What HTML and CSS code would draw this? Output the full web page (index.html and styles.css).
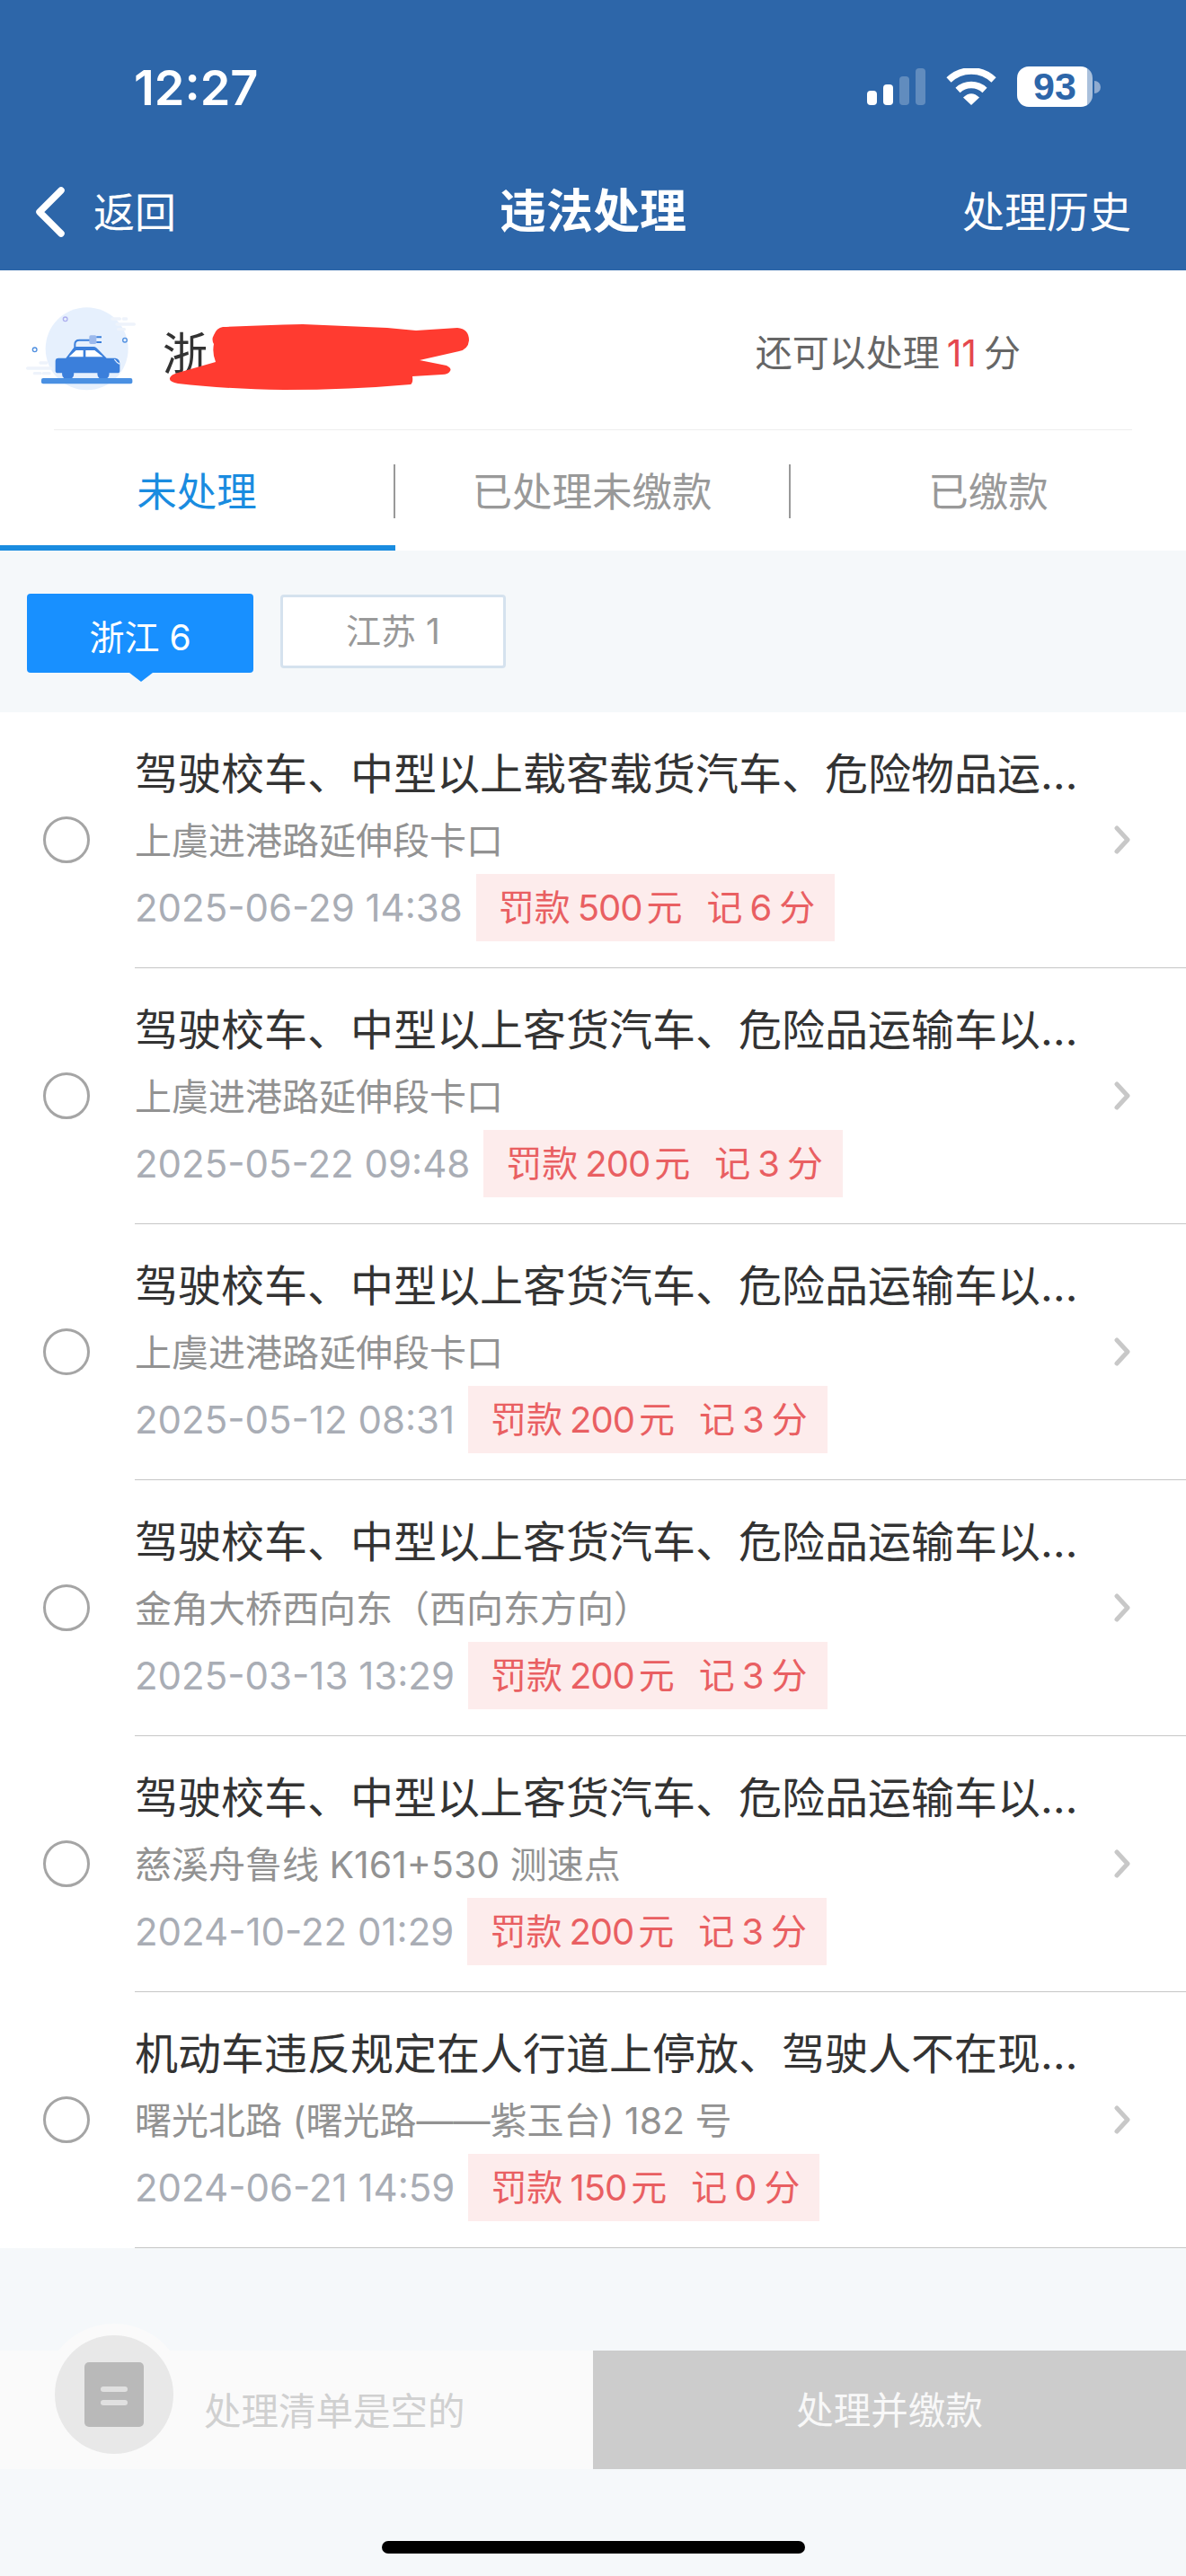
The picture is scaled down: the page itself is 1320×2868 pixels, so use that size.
FILE: index.html
```html
<!DOCTYPE html>
<html lang="zh-CN">
<head>
  <meta charset="UTF-8">
  <meta name="viewport" content="width=device-width, initial-scale=1.0">
  <title>违法处理</title>
  <link rel="stylesheet" href="styles.css">
</head>
<body>
  <header class="top">
    <div class="status">
      <span class="clock">12:27</span>
      <div class="status-icons">
        <svg class="signal" width="65" height="41" viewBox="0 0 65 41">
          <rect x="0" y="25" width="11" height="16" rx="4" fill="#fff"/>
          <rect x="18" y="18" width="11" height="23" rx="4" fill="#fff"/>
          <rect x="36" y="9" width="11" height="32" rx="4" fill="#fff" opacity="0.25"/>
          <rect x="54" y="0" width="11" height="41" rx="4" fill="#fff" opacity="0.25"/>
        </svg>
        <svg class="wifi" width="58" height="41" viewBox="0 0 58 41">
          <path d="M4 13A36 36 0 0 1 54 13" fill="none" stroke="#fff" stroke-width="7.5"/>
          <path d="M14 24.500A22 22 0 0 1 44 24.500" fill="none" stroke="#fff" stroke-width="7.500"/>
          <path d="M20 32.500Q29 24 38 32.500L29 41Z" fill="#fff"/>
        </svg>
        <div class="battery">
          <span class="battery-level">93</span>
          <span class="battery-nub"></span>
        </div>
      </div>
    </div>
    <nav class="nav">
      <div class="nav-back">
        <svg width="32" height="56" viewBox="0 0 32 56">
          <polyline points="28,4 4,28 28,52" fill="none" stroke="#fff" stroke-width="7.500" stroke-linecap="round" stroke-linejoin="round"/>
        </svg>
        <span class="nav-back-text">返回</span>
      </div>
      <div class="nav-title">违法处理</div>
      <div class="nav-history">处理历史</div>
    </nav>
  </header>

  <section class="vehicle">
    <svg class="car" width="140" height="100" viewBox="0 0 420 300">
      <circle cx="230" cy="145" r="138" fill="#e6f0fd"/>
      <g stroke="#eef3fb" stroke-width="10" stroke-linecap="round">
        <line x1="315" y1="45" x2="340" y2="45"/>
        <line x1="352" y1="45" x2="362" y2="45"/>
        <line x1="330" y1="63" x2="388" y2="63"/>
        <line x1="335" y1="80" x2="355" y2="80"/>
        <line x1="75" y1="192" x2="95" y2="192"/>
        <line x1="32" y1="210" x2="110" y2="210"/>
        <line x1="55" y1="227" x2="75" y2="227"/>
        <line x1="85" y1="227" x2="105" y2="227"/>
      </g>
      <circle cx="158" cy="46" r="7" fill="none" stroke="#aeb0ee" stroke-width="4"/>
      <circle cx="56" cy="148" r="7" fill="none" stroke="#4f8fe0" stroke-width="4"/>
      <circle cx="357" cy="116" r="7" fill="none" stroke="#4f8fe0" stroke-width="4"/>
      <path d="M190 142V130Q190 116 205 116H240" fill="none" stroke="#3b7fdb" stroke-width="6"/>
      <rect x="238" y="100" width="24" height="29" rx="5" fill="#9cb9ec"/>
      <path d="M262 106H279M262 123H279" stroke="#3b7fdb" stroke-width="6"/>
      <circle cx="167" cy="228" r="20" fill="#3b7fdb"/>
      <circle cx="285" cy="228" r="20" fill="#3b7fdb"/>
      <path d="M160 176L186 142Q190 138 196 138H252Q258 138 262 142L296 176H325Q340 178 340 195V218Q340 226 332 226H133Q125 226 125 218V186Q125 176 135 176Z" fill="#3b7fdb"/>
      <path d="M170 172L194 150H218V172ZM226 150H256L284 172H226Z" fill="#fff"/>
      <path d="M322 180Q330 192 340 196" fill="none" stroke="#e6f0fd" stroke-width="4"/>
      <rect x="78" y="243" width="304" height="19" rx="6" fill="#4a90e2"/>
    </svg>
    <div class="plate">浙</div>
    <div class="points">还可以处理<em>11</em>分</div>
    <svg class="scribble" width="340" height="80" viewBox="185 358 340 80">
      <path d="M238 373Q241 365 248 364Q290 362 337 361L431 365L463 368L509 365Q522 366 522 379Q521 389 511 391L467 401L497 407Q503 410 501 413Q499 417 492 417L459 419Q460 426 457 428Q390 434 316 434Q250 433 198 427Q188 425 189 421Q190 417 198 415L240 403Q236 393 238 383Q235 378 238 373Z" fill="#ff3b30"/>
    </svg>
  </section>
  <div class="divider-wrap"><div class="divider"></div></div>

  <div class="tabs">
    <div class="tab tab-active"><div class="tab-label">未处理</div></div>
    <div class="tab"><div class="tab-label">已处理未缴款</div></div>
    <div class="tab"><div class="tab-label tab-last">已缴款</div></div>
  </div>

  <div class="regions">
    <div class="region region-active">浙江 6</div>
    <div class="region">江苏 1</div>
  </div>

  <ul class="list">
    <li class="row">
      <div class="radio-cell"><span class="radio"></span></div>
      <div class="row-body">
        <div class="row-text">
          <div class="row-title">驾驶校车、中型以上载客载货汽车、危险物品运…</div>
          <div class="row-place">上虞进港路延伸段卡口</div>
          <div class="row-meta">
            <span class="row-date">2025-06-29 14:38</span>
            <span class="fine">罚款<span class="fine-money">500</span>元<i class="fine-gap"></i>记<span class="fine-points">6</span>分</span>
          </div>
        </div>
        <svg class="more" width="18" height="32" viewBox="0 0 18 32"><polyline points="3,3 15,16 3,29" fill="none" stroke="#c8c8c8" stroke-width="5" stroke-linecap="round" stroke-linejoin="round"/></svg>
      </div>
    </li>
    <li class="row">
      <div class="radio-cell"><span class="radio"></span></div>
      <div class="row-body">
        <div class="row-text">
          <div class="row-title">驾驶校车、中型以上客货汽车、危险品运输车以…</div>
          <div class="row-place">上虞进港路延伸段卡口</div>
          <div class="row-meta">
            <span class="row-date">2025-05-22 09:48</span>
            <span class="fine">罚款<span class="fine-money">200</span>元<i class="fine-gap"></i>记<span class="fine-points">3</span>分</span>
          </div>
        </div>
        <svg class="more" width="18" height="32" viewBox="0 0 18 32"><polyline points="3,3 15,16 3,29" fill="none" stroke="#c8c8c8" stroke-width="5" stroke-linecap="round" stroke-linejoin="round"/></svg>
      </div>
    </li>
    <li class="row">
      <div class="radio-cell"><span class="radio"></span></div>
      <div class="row-body">
        <div class="row-text">
          <div class="row-title">驾驶校车、中型以上客货汽车、危险品运输车以…</div>
          <div class="row-place">上虞进港路延伸段卡口</div>
          <div class="row-meta">
            <span class="row-date">2025-05-12 08:31</span>
            <span class="fine">罚款<span class="fine-money">200</span>元<i class="fine-gap"></i>记<span class="fine-points">3</span>分</span>
          </div>
        </div>
        <svg class="more" width="18" height="32" viewBox="0 0 18 32"><polyline points="3,3 15,16 3,29" fill="none" stroke="#c8c8c8" stroke-width="5" stroke-linecap="round" stroke-linejoin="round"/></svg>
      </div>
    </li>
    <li class="row">
      <div class="radio-cell"><span class="radio"></span></div>
      <div class="row-body">
        <div class="row-text">
          <div class="row-title">驾驶校车、中型以上客货汽车、危险品运输车以…</div>
          <div class="row-place">金角大桥西向东（西向东方向）</div>
          <div class="row-meta">
            <span class="row-date">2025-03-13 13:29</span>
            <span class="fine">罚款<span class="fine-money">200</span>元<i class="fine-gap"></i>记<span class="fine-points">3</span>分</span>
          </div>
        </div>
        <svg class="more" width="18" height="32" viewBox="0 0 18 32"><polyline points="3,3 15,16 3,29" fill="none" stroke="#c8c8c8" stroke-width="5" stroke-linecap="round" stroke-linejoin="round"/></svg>
      </div>
    </li>
    <li class="row">
      <div class="radio-cell"><span class="radio"></span></div>
      <div class="row-body">
        <div class="row-text">
          <div class="row-title">驾驶校车、中型以上客货汽车、危险品运输车以…</div>
          <div class="row-place">慈溪舟鲁线 K161+530 测速点</div>
          <div class="row-meta">
            <span class="row-date">2024-10-22 01:29</span>
            <span class="fine">罚款<span class="fine-money">200</span>元<i class="fine-gap"></i>记<span class="fine-points">3</span>分</span>
          </div>
        </div>
        <svg class="more" width="18" height="32" viewBox="0 0 18 32"><polyline points="3,3 15,16 3,29" fill="none" stroke="#c8c8c8" stroke-width="5" stroke-linecap="round" stroke-linejoin="round"/></svg>
      </div>
    </li>
    <li class="row">
      <div class="radio-cell"><span class="radio"></span></div>
      <div class="row-body">
        <div class="row-text">
          <div class="row-title">机动车违反规定在人行道上停放、驾驶人不在现…</div>
          <div class="row-place">曙光北路 (曙光路——紫玉台) 182 号</div>
          <div class="row-meta">
            <span class="row-date">2024-06-21 14:59</span>
            <span class="fine">罚款<span class="fine-money">150</span>元<i class="fine-gap"></i>记<span class="fine-points">0</span>分</span>
          </div>
        </div>
        <svg class="more" width="18" height="32" viewBox="0 0 18 32"><polyline points="3,3 15,16 3,29" fill="none" stroke="#c8c8c8" stroke-width="5" stroke-linecap="round" stroke-linejoin="round"/></svg>
      </div>
    </li>
  </ul>

  <footer class="cart">
    <div class="cart-info">
      <div class="cart-badge">
        <div class="cart-doc">
          <span class="cart-doc-line"></span>
          <span class="cart-doc-line"></span>
        </div>
      </div>
      <span class="cart-empty">处理清单是空的</span>
    </div>
    <div class="cart-pay">处理并缴款</div>
  </footer>
  <div class="home-bar"></div>
</body>
</html>
```

FILE: styles.css
```css
* {
  box-sizing: border-box;
}

body {
  margin: 0;
  width: 1320px;
  height: 2868px;
  overflow: hidden;
  background-color: #f5f8fa;
  font-family: Inter, "Noto Sans CJK SC", sans-serif;
}

/* blue header */
.top {
  height: 301px;
  padding-top: 74px;
  background-color: #2d66a9;
  color: #fff;
}

.status {
  display: flex;
  justify-content: space-between;
  align-items: center;
  height: 45px;
  padding: 0 95px 0 149px;
}

.clock {
  padding-top: 2px;
  font-size: 54px;
  font-weight: 600;
}

.status-icons {
  display: flex;
  align-items: center;
  gap: 22px;
}

.battery {
  display: flex;
  align-items: center;
  gap: 2px;
}

.battery-level {
  width: 84px;
  height: 45px;
  border-radius: 13px;
  background: linear-gradient(to right, #fff 93%, #a9c0dc 93%);
  color: #2d66a9;
  font-family: "Liberation Sans", sans-serif;
  font-size: 43px;
  font-weight: 700;
  line-height: 45px;
  text-align: center;
}

.battery-nub {
  width: 7px;
  height: 14px;
  border-radius: 0 7px 7px 0;
  background-color: #8fabd0;
}

.nav {
  display: grid;
  grid-template-columns: 1fr auto 1fr;
  align-items: center;
  height: 86px;
  margin-top: 74px;
  padding: 0 40px;
}

.nav-back {
  display: flex;
  align-items: center;
  gap: 32px;
  font-size: 46px;
}

.nav-back-text {
  padding-bottom: 7px;
}

.nav-title {
  padding-bottom: 9px;
  font-size: 52px;
  font-weight: 700;
}

.nav-history {
  padding: 0 21px 7px 0;
  font-size: 47px;
  text-align: right;
}

/* plate row */
.vehicle {
  position: relative;
  display: flex;
  align-items: center;
  height: 177px;
  padding-left: 20px;
  background-color: #fff;
}

.plate {
  margin-left: 21px;
  color: #333;
  font-size: 50px;
}

.points {
  margin-left: auto;
  margin-right: 184px;
  color: #666;
  font-size: 41px;
}

.points em {
  margin: 0 8px;
  color: #e5484d;
  font-style: normal;
}

.scribble {
  position: absolute;
  left: 185px;
  top: 57px;
}

.divider-wrap {
  padding: 0 60px;
  background-color: #fff;
}

.divider {
  height: 1px;
  background-color: #eee;
}

/* tabs */
.tabs {
  display: grid;
  grid-template-columns: repeat(3, 440px);
  background-color: #fff;
}

.tab {
  height: 134px;
  padding-top: 38px;
  border-bottom: 6px solid transparent;
  color: #999;
  font-size: 44.5px;
}

.tab-active {
  border-bottom-color: #1a8ce0;
  color: #1a8ce0;
}

.tab-label {
  height: 60px;
  border-right: 2px solid #999;
  line-height: 62px;
  text-align: center;
}

.tab-last {
  border-right: none;
}

/* province chips */
.regions {
  display: flex;
  align-items: flex-start;
  gap: 30px;
  height: 180px;
  padding: 48px 0 0 30px;
}

.region {
  width: 251px;
  height: 82px;
  margin-top: 1px;
  border: 3px solid #d5e2ee;
  border-radius: 4px;
  background-color: #fff;
  color: #999;
  font-size: 39px;
  line-height: 76px;
  text-align: center;
}

.region-active {
  position: relative;
  width: 252px;
  height: 88px;
  margin-top: 0;
  border: none;
  background-color: #1890ff;
  color: #fff;
  line-height: 98px;
}

.region-active::after {
  content: "";
  position: absolute;
  left: 114px;
  bottom: -10px;
  border-left: 13px solid transparent;
  border-right: 13px solid transparent;
  border-top: 10px solid #1890ff;
}

/* violations */
.list {
  margin: 0;
  padding: 0;
  list-style: none;
  background-color: #fff;
}

.row {
  display: flex;
  height: 285px;
}

.radio-cell {
  display: flex;
  justify-content: center;
  align-items: center;
  flex: 0 0 150px;
  padding: 0 2px 2px 0;
}

.radio {
  width: 52px;
  height: 52px;
  border: 3px solid #a5a5a5;
  border-radius: 50%;
}

.row-body {
  display: flex;
  align-items: center;
  flex: 1;
  min-width: 0;
  border-bottom: 1px solid #c6c6c6;
}

.row-text {
  align-self: flex-start;
  width: 1050px;
  padding-top: 39px;
}

.row-title {
  height: 60px;
  color: #333;
  font-size: 48px;
  line-height: 60px;
  white-space: nowrap;
}

.row-place {
  height: 60px;
  margin-top: 14px;
  color: #929292;
  font-size: 41px;
  line-height: 60px;
}

.row-meta {
  display: flex;
  align-items: center;
  gap: 15px;
  margin-top: 7px;
}

.row-date {
  color: #a9adb5;
  font-size: 42px;
}

.fine {
  height: 75px;
  padding: 0 22px 0 25px;
  background-color: #fdecec;
  color: #e95f62;
  font-size: 40px;
  line-height: 75px;
  white-space: nowrap;
}

.fine-money {
  margin: 0 5px 0 8px;
  letter-spacing: -1px;
}

.fine-points {
  margin: 0 8px;
}

.fine-gap {
  display: inline-block;
  width: 27px;
}

.more {
  margin-left: 40px;
}

/* bottom bar */
.cart {
  display: flex;
  height: 132px;
  margin-top: 114px;
  background-color: #fafafa;
}

.cart-info {
  display: flex;
  align-items: flex-start;
  flex: 0 0 660px;
  padding-left: 61px;
}

.cart-badge {
  display: flex;
  justify-content: center;
  align-items: center;
  width: 132px;
  height: 132px;
  margin-top: -17px;
  border-radius: 50%;
  background-color: #e8e8e8;
  box-shadow: 0 0 0 13px #fafafa;
}

.cart-doc {
  display: flex;
  flex-direction: column;
  align-items: center;
  gap: 9px;
  width: 66px;
  height: 72px;
  padding-top: 27px;
  border-radius: 5px;
  background-color: #b9b9b9;
}

.cart-doc-line {
  width: 30px;
  height: 6px;
  border-radius: 3px;
  background-color: #e0e0e0;
}

.cart-empty {
  margin-left: 34px;
  color: #d0d0d0;
  font-size: 41.5px;
  line-height: 136px;
}

.cart-pay {
  flex: 1;
  background-color: #ccc;
  color: #f8f8f8;
  font-size: 41.5px;
  line-height: 134px;
  text-align: center;
}

.home-bar {
  width: 471px;
  height: 14px;
  margin: 80px auto 0;
  border-radius: 7px;
  background-color: #000;
}
```
